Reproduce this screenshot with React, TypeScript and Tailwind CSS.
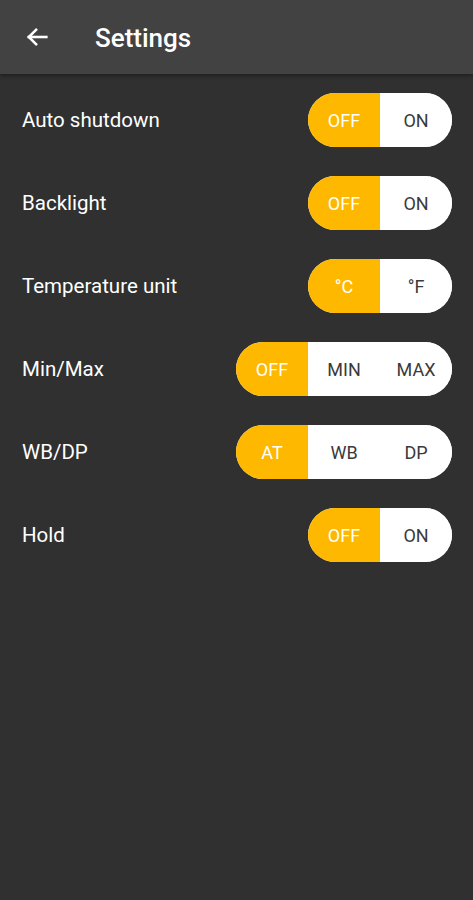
import React from "react";

type Row = { label: string; options: string[] };

const rows: Row[] = [
  { label: "Auto shutdown", options: ["OFF", "ON"] },
  { label: "Backlight", options: ["OFF", "ON"] },
  { label: "Temperature unit", options: ["°C", "°F"] },
  { label: "Min/Max", options: ["OFF", "MIN", "MAX"] },
  { label: "WB/DP", options: ["AT", "WB", "DP"] },
  { label: "Hold", options: ["OFF", "ON"] },
];

function Segmented({ options }: { options: string[] }) {
  return (
    <div className="flex h-[54px] overflow-hidden rounded-full bg-white">
      {options.map((o, i) => (
        <div
          key={o}
          className={
            i === 0
              ? "flex w-[72px] items-center justify-center bg-[#ffb800] text-[18px] text-white"
              : "flex w-[72px] items-center justify-center bg-white text-[18px] text-[#3a3a3a]"
          }
        >
          {o}
        </div>
      ))}
    </div>
  );
}

export default function App() {
  return (
    <div
      className="flex min-h-[900px] w-full flex-col bg-[#303030]"
      style={{ fontFamily: "Roboto, 'Noto Sans', sans-serif" }}
    >
      <div className="relative z-10 flex h-[74px] items-center bg-[#424242] shadow-[0_2px_4px_rgba(0,0,0,0.35)]">
        <div className="flex w-[95px] items-center pl-[23px]">
          <svg width="28" height="28" viewBox="0 0 24 24" fill="none" stroke="white" strokeWidth="2.2" strokeLinecap="square">
            <path d="M20 12H5" />
            <path d="M12 5l-7 7 7 7" strokeLinecap="butt" />
          </svg>
        </div>
        <div className="pt-[2px] text-[26px] font-medium text-white">Settings</div>
      </div>
      <div className="flex flex-col gap-[29px] pt-[19px] pl-[22px] pr-[21px]">
        {rows.map((r) => (
          <div key={r.label} className="flex h-[54px] items-center justify-between">
            <div className="pt-[1px] text-[20.5px] text-white">{r.label}</div>
            <Segmented options={r.options} />
          </div>
        ))}
      </div>
    </div>
  );
}
